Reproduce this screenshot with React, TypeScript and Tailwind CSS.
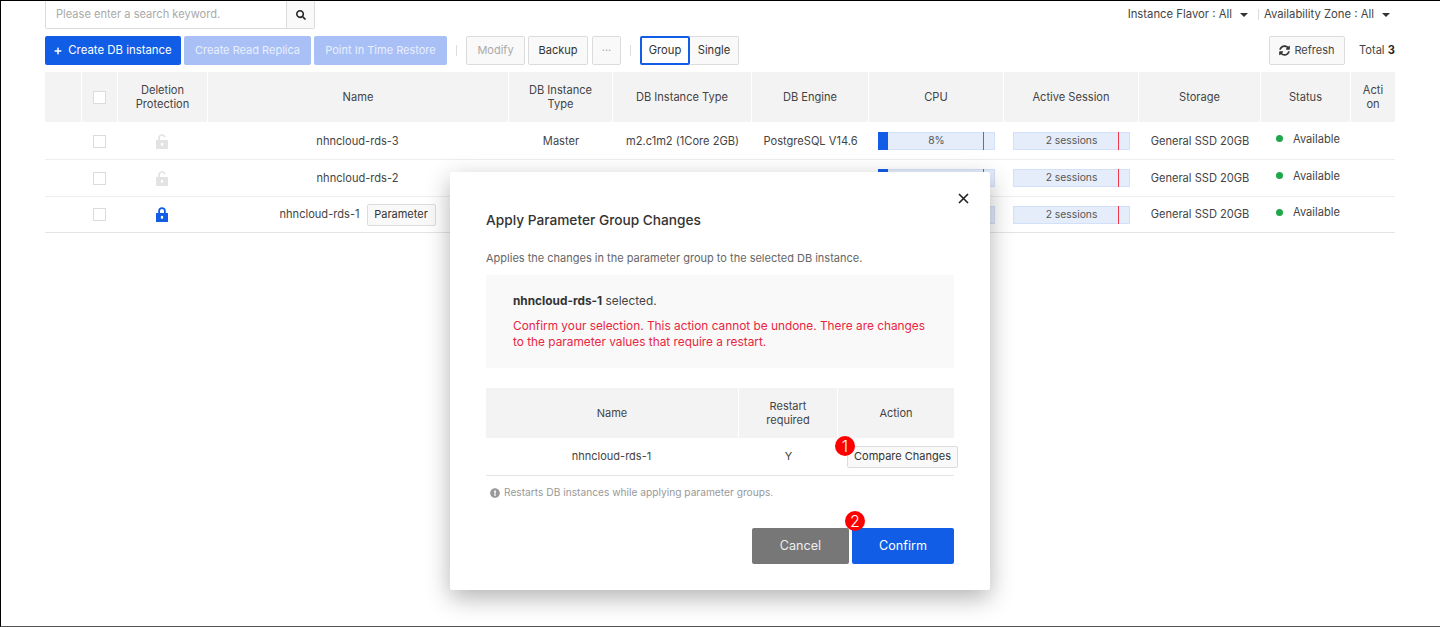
import React from "react";
import { FaSearch, FaSyncAlt, FaPlus, FaExclamationCircle } from "react-icons/fa";

const columns = [
  "",
  "",
  "Deletion Protection",
  "Name",
  "DB Instance Type",
  "DB Instance Type",
  "DB Engine",
  "CPU",
  "Active Session",
  "Storage",
  "Status",
  "Acti on",
];

const rows = [
  { name: "nhncloud-rds-3", locked: false, parameter: false },
  { name: "nhncloud-rds-2", locked: false, parameter: false },
  { name: "nhncloud-rds-1", locked: true, parameter: true },
];

const gridCols =
  "grid grid-cols-[37px_36px_90px_301px_104px_139px_117px_135px_135px_122px_90px_44px]";

const LockIcon = ({ locked }: { locked: boolean }) => (
  <svg width="12" height="15" viewBox="0 0 12 15" className={locked ? "text-[#125de6]" : "text-[#e3e3e3]"}>
    {locked ? (
      <path d="M2.2 6V4a3.8 3.8 0 0 1 7.6 0v2H8V4a2 2 0 0 0-4 0v2z" fill="currentColor" />
    ) : (
      <path d="M2.2 6V4a3.8 3.8 0 0 1 7.5-.9L8 3.6A2 2 0 0 0 4 4v2z" fill="currentColor" />
    )}
    <path
      fillRule="evenodd"
      d="M0 6.5A.5.5 0 0 1 .5 6h11a.5.5 0 0 1 .5.5v8a.5.5 0 0 1-.5.5H.5a.5.5 0 0 1-.5-.5zM6 8.8a1.3 1.3 0 0 0-.7 2.4V12h1.4v-.8A1.3 1.3 0 0 0 6 8.8z"
      fill="currentColor"
    />
  </svg>
);

const Checkbox = () => (
  <span className="block w-[13px] h-[13px] border border-[#dcdcdc] bg-white" />
);

const Gauge = ({ label, fill }: { label: string; fill: boolean }) => (
  <div className="relative w-full h-[18px] bg-[#e5edfb] border border-[#d3e0f9] flex items-center justify-center text-[10.3px] text-[#555]">
    {fill && <span className="absolute left-[-1px] top-[-1px] h-[18px] w-[10px] bg-[#125de6]" />}
    <span className="absolute left-[104px] top-[-1px] h-[18px] w-px bg-[#f0364a]" />
    {label}
  </div>
);

const ToolButton = ({ children, className = "" }: { children: React.ReactNode; className?: string }) => (
  <button className={`h-[29px] border border-[#dcdcdc] rounded-[2px] bg-[#f9f9f9] text-[11px] text-[#333] ${className}`}>
    {children}
  </button>
);

const Caret = () => (
  <span className="block w-0 h-0 border-x-[4px] border-x-transparent border-t-[4px] border-t-[#333]" />
);

const App = () => {
  return (
    <div className="relative h-[627px] w-[1440px] overflow-hidden border-t border-l border-b border-t-black border-l-black border-b-[#555] bg-white font-['Inter','Liberation_Sans',sans-serif] text-[11.1px] text-[#444]">
      <div className="pl-[44px] w-[1394px]">
        <div className="flex items-start justify-between h-[28px]">
          <div className="flex w-[270px] h-[28px] border border-t-0 border-[#dcdcdc] rounded-b-[2px]">
            <span className="flex-1 pl-[10px] leading-[27px] text-[#aaa]">Please enter a search keyword.</span>
            <span className="w-[28px] flex items-center justify-center bg-[#f9f9f9] border-l border-[#dcdcdc] text-[#222]">
              <FaSearch size={10} />
            </span>
          </div>
          <div className="flex items-center h-[27px] pr-[5px] text-[#444] text-[11.3px]">
            <span>Instance Flavor : All</span>
            <span className="ml-[8px] mr-[10px]"><Caret /></span>
            <span className="h-[11px] w-px bg-[#ddd] mr-[5px]" />
            <span>Availability Zone : All</span>
            <span className="ml-[8px]"><Caret /></span>
          </div>
        </div>

        <div className="flex items-center mt-[7px] h-[29px]">
          <button className="h-[29px] w-[136px] rounded-[2px] bg-[#125de6] text-[11.4px] text-white flex items-center justify-center gap-[6px]">
            <FaPlus size={8} />
            Create DB instance
          </button>
          <button className="ml-[3px] h-[29px] w-[127px] rounded-[2px] bg-[#a8c0f6] text-[11px] text-[#e9effd]">Create Read Replica</button>
          <button className="ml-[3px] h-[29px] w-[133px] rounded-[2px] bg-[#a8c0f6] text-[11px] text-[#e9effd]">Point In Time Restore</button>
          <span className="ml-[9px] h-[11px] w-px bg-[#ddd]" />
          <ToolButton className="ml-[9px] w-[59px] !text-[#aaa]">Modify</ToolButton>
          <ToolButton className="ml-[3px] w-[60px]">Backup</ToolButton>
          <ToolButton className="ml-[4px] w-[29px] !text-[#aaa]">···</ToolButton>
          <span className="ml-[9px] h-[11px] w-px bg-[#ddd]" />
          <button className="ml-[9px] h-[29px] w-[50px] border-2 border-[#125de6] rounded-[2px] bg-white text-[11.2px] text-[#333]">Group</button>
          <button className="h-[29px] w-[49px] border border-l-0 border-[#dcdcdc] rounded-r-[2px] bg-[#f9f9f9] text-[11.2px] text-[#333]">Single</button>
          <ToolButton className="ml-auto w-[76px] flex items-center justify-center gap-[4px] text-[#444]">
            <FaSyncAlt size={11} className="text-[#333]" />
            Refresh
          </ToolButton>
          <span className="ml-[14px] w-[36px] whitespace-nowrap text-[#444]">
            Total <b className="font-bold text-[#222]">3</b>
          </span>
        </div>

        <div className={`${gridCols} mt-[7px] h-[50px] bg-[#f3f3f3] text-[#444]`}>
          {columns.map((label, i) => (
            <div
              key={i}
              className="flex items-center justify-center px-2 text-center leading-[14.5px] border-r border-white last:border-r-0 last:px-[8px]"
            >
              {i === 1 ? <Checkbox /> : label}
            </div>
          ))}
        </div>

        <div className="pt-px">
          {rows.map((row) => (
            <div key={row.name} className={`${gridCols} h-[37px] last:h-[36px] items-center border-b border-[#eee] last:border-[#e4e4e4]`}>
              <div />
              <div className="flex justify-center pr-px"><Checkbox /></div>
              <div className="flex justify-center pr-[2px]"><LockIcon locked={row.locked} /></div>
              <div className="flex items-center justify-center gap-[7px] pr-[2px]">
                {row.name}
                {row.parameter && (
                  <span className="h-[22px] w-[69px] flex items-center justify-center border border-[#dcdcdc] rounded-[2px] bg-[#f9f9f9] text-[11px] text-[#333]">
                    Parameter
                  </span>
                )}
              </div>
              <div className="text-center">Master</div>
              <div className="text-center">m2.c1m2 (1Core 2GB)</div>
              <div className="text-center">PostgreSQL V14.6</div>
              <div className="pl-[9px] pr-[9px]"><Gauge label="8%" fill /></div>
              <div className="pl-[9px] pr-[9px]"><Gauge label="2 sessions" fill={false} /></div>
              <div className="text-center">General SSD 20GB</div>
              <div className="flex items-center pl-[15px] pb-[4px]">
                <span className="w-[7px] h-[7px] rounded-full bg-[#1fa84a]" />
                <span className="ml-[10px]">Available</span>
              </div>
              <div />
            </div>
          ))}
        </div>
      </div>

      <div className="absolute left-[449px] top-[171px] w-[540px] h-[418px] bg-white rounded-[2px] shadow-[0_8px_24px_rgba(0,0,0,0.3)] px-[36px] pt-[40px] text-[11px]">
        <svg className="absolute right-[21px] top-[21px] text-[#222]" width="11" height="11" viewBox="0 0 11 11">
          <path d="M1 1l9 9M10 1l-9 9" stroke="currentColor" strokeWidth="1.6" />
        </svg>
        <h2 className="text-[13.7px] font-medium leading-[17px] text-[#333]">Apply Parameter Group Changes</h2>
        <p className="mt-[22px] text-[11px] leading-[14px] text-[#666]">
          Applies the changes in the parameter group to the selected DB instance.
        </p>
        <div className="mt-[10px] h-[93px] bg-[#f9f9f9] pl-[27px] pr-[20px] pt-[19px] text-[11.85px]">
          <p className="leading-[14px] text-[#444]">
            <b className="font-bold text-[#333]">nhncloud-rds-1</b> selected.
          </p>
          <p className="mt-[10px] leading-[16px] text-[#e8263f]">
            Confirm your selection. This action cannot be undone. There are changes to the parameter values that require a restart.
          </p>
        </div>

        <div className="mt-[20px] grid grid-cols-[253px_99px_116px] h-[50px] bg-[#f3f3f3]">
          <div className="flex items-center justify-center border-r border-white">Name</div>
          <div className="flex items-center justify-center text-center leading-[14.5px] border-r border-white px-4">Restart required</div>
          <div className="flex items-center justify-center">Action</div>
        </div>
        <div className="grid grid-cols-[253px_99px_116px] h-[38px] items-center border-b border-[#e4e4e4]">
          <div className="text-center pr-[2px]">nhncloud-rds-1</div>
          <div className="text-center">Y</div>
          <div className="relative h-[22px]">
            <button className="absolute left-[9px] top-0 w-[111px] h-[22px] border border-[#dcdcdc] rounded-[2px] bg-[#f9f9f9] text-[#333] whitespace-nowrap">
              Compare Changes
            </button>
            <span className="absolute left-[-3px] top-[-10px] w-[20px] h-[20px] rounded-full bg-[#f00] text-white text-[16px] font-light leading-[20px] text-center">1</span>
          </div>
        </div>
        <div className="mt-[10px] flex items-center pl-[4px] text-[10.2px] leading-[13px] text-[#999]">
          <FaExclamationCircle size={10} className="text-[#999]" />
          <span className="ml-[4px]">Restarts DB instances while applying parameter groups.</span>
        </div>

        <div className="relative mt-[29px] flex justify-end gap-[3px]">
          <button className="h-[36px] w-[97px] rounded-[2px] bg-[#777] text-[12.6px] text-[#eee]">Cancel</button>
          <button className="h-[36px] w-[102px] rounded-[2px] bg-[#125de6] text-[12.6px] text-white">Confirm</button>
          <span className="absolute right-[89px] top-[-17px] w-[20px] h-[20px] rounded-full bg-[#f00] text-white text-[16px] font-light leading-[20px] text-center">2</span>
        </div>
      </div>
    </div>
  );
};

export default App;
